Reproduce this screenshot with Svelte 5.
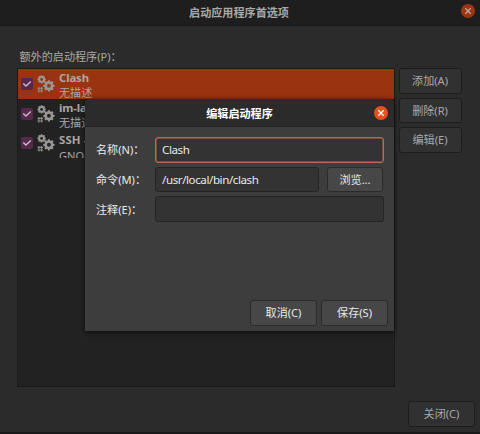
<script>
  const programs = [
    { name: 'Clash', note: '无描述', selected: true },
    { name: 'im-lau', note: '无描述' },
    { name: 'SSH -', note: 'GNOM', low: true }
  ];
  const teeth = [0, 45, 90, 135, 180, 225, 270, 315];
  const cogs = [
    { x: 4.6, y: 4.4, s: 0.7 },
    { x: 11.9, y: 10.8, s: 0.94 }
  ];
</script>

{#snippet closeIcon()}
  <svg width="14" height="14" viewBox="0 0 14 14"><path d="M4.3 4.3l5.4 5.4m0-5.4l-5.4 5.4" fill="none" stroke="currentColor" stroke-width="1.25" /></svg>
{/snippet}

{#snippet gears()}
  <svg class="gears" width="18" height="18" viewBox="0 0 18 18">
    {#each cogs as c}
      <g transform="translate({c.x} {c.y}) scale({c.s})">
        {#each teeth as a}
          <rect x="-1.2" y="-6" width="2.4" height="3" rx=".5" transform="rotate({a})" fill="#989694" />
        {/each}
        <circle r="3.4" fill="none" stroke="#989694" stroke-width="2.7" />
      </g>
    {/each}
    <path d="M1.9 12v5.4M4.6 12v5.4M.5 13.4h5.5M.5 16h5.5" stroke="#8c8a88" stroke-width="1.1" fill="none" />
  </svg>
{/snippet}

<div class="window">
  <header class="bar">
    <h1>启动应用程序首选项</h1>
    <span class="close">{@render closeIcon()}</span>
  </header>
  <main>
    <div class="caption">额外的启动程序(P)：</div>
    <div class="columns">
      <div class="list">
        {#each programs as p}
          <div class="row" class:selected={p.selected} class:low={p.low}>
            <span class="check"><svg width="12" height="12" viewBox="0 0 12 12"><path d="M2.3 5.5l2.6 2.6 4.9-4.6" fill="none" stroke="#c6bdc5" stroke-width="1.4" /></svg></span>
            {@render gears()}
            <div class="info"><b>{p.name}</b><span>{p.note}</span></div>
          </div>
        {/each}
      </div>
      <div class="side">
        <button>添加(A)</button>
        <button>删除(R)</button>
        <button>编辑(E)</button>
      </div>
    </div>
    <footer><button>关闭(C)</button></footer>
  </main>

  <section class="dialog">
    <header class="bar">
      <h1>编辑启动程序</h1>
      <span class="close">{@render closeIcon()}</span>
    </header>
    <div class="form">
      <div class="line"><span class="label">名称(N)：</span><div class="field focus">Clash</div></div>
      <div class="line"><span class="label">命令(M)：</span><div class="field path">/usr/local/bin/clash</div><button class="browse">浏览...</button></div>
      <div class="line"><span class="label">注释(E)：</span><div class="field"></div></div>
    </div>
    <div class="actions"><button>取消(C)</button><button>保存(S)</button></div>
  </section>
</div>

<style>
  :global(body) { margin: 0; background: #2b2b2b; }
  * { box-sizing: border-box; }
  .window {
    position: relative; width: 480px; height: 434px; overflow: hidden;
    background: #2b2b2b; color: #aaa8a6; border-bottom: 2px solid #1b1a1b;
    font: 11.1px/15px "Noto Sans", "Noto Sans CJK SC", sans-serif; white-space: nowrap;
  }
  .bar { display: flex; align-items: center; justify-content: center; position: relative; }
  .window > .bar { height: 26px; background: #1e1e1e; border-bottom: 1px solid #191919; }
  h1 { margin: 0; font-size: 11.1px; line-height: 15px; font-weight: 700; }
  .window > .bar h1 { padding-right: 2px; }
  .close {
    position: absolute; right: 5px; top: 4px; width: 14px; height: 14px;
    border-radius: 50%; background: #9e3510; color: #c0aaa2; display: flex;
  }
  .caption { padding: 23px 0 0 19.5px; height: 42px; }
  .columns { display: flex; padding-left: 17px; }
  .list { width: 378px; height: 319px; background: #222; border: 1px solid #1a1a1a; flex: none; }
  .row { height: 29.7px; display: flex; padding-left: 3px; overflow: hidden; }
  .row.selected { background: #9a330f; }
  .check { width: 12px; height: 12px; margin-top: 9px; background: #56294c; border-radius: 2px; display: flex; flex: none; }
  .gears { margin: 6px 0 0 4px; flex: none; }
  .info { display: flex; flex-direction: column; padding-left: 4px; }
  .info b { height: 15px; line-height: 17px; font-size: 11.4px; letter-spacing: -.15px; }
  .info span { height: 16px; line-height: 18px; }
  .low .info { padding-top: 3px; }
  .low b { letter-spacing: .1px; }
  .low .info span { padding-top: 1px; }
  .side { display: flex; flex-direction: column; gap: 4px; padding-left: 4px; }
  button {
    font: inherit; color: inherit; margin: 0; padding: 0; width: 63px; height: 25.7px;
    background: #313131; border: 1px solid #1d1d1d; border-radius: 3px;
    display: flex; align-items: center; justify-content: center;
  }
  .side button { padding: 0 1px 1px 0; }
  footer { display: flex; justify-content: flex-end; padding: 14px 5px 0 0; }
  footer button { width: 67px; }
  .dialog {
    position: absolute; left: 85px; top: 99px; width: 309px; height: 232px;
    background: #3d3d3d; color: #e9e9e9; border-radius: 5px 5px 0 0;
    box-shadow: 0 1px 5px 1px rgba(0, 0, 0, .5);
  }
  .dialog .bar { height: 28px; background: #2b2b2b; border-bottom: 1px solid #202020; border-radius: 5px 5px 0 0; }
  .dialog h1 { color: #fff; padding-top: 1px; }
  .dialog .close { right: 6.5px; top: 6.7px; background: #e5501f; color: #fff; }
  .form { display: flex; flex-direction: column; gap: 4px; padding: 10px 10px 0 11px; }
  .line { display: flex; height: 25.7px; align-items: center; }
  .label { width: 59px; flex: none; }
  .field {
    flex: 1; height: 25.7px; padding: 0 6px; line-height: 24px; background: #333;
    border: 1px solid #242424; border-radius: 3px; font-size: 11.6px; letter-spacing: -.42px;
  }
  .focus { border-color: #b66b50; box-shadow: inset 0 0 0 .5px #b66b50; }
  .path { flex: none; width: 164px; }
  .browse { width: 56px; margin-left: 8px; }
  .dialog button { background: #474747; border-color: #2b2b2b; }
  .actions { display: flex; justify-content: flex-end; gap: 4px; padding: 78px 6px 0 0; }
  .actions button { width: 67px; height: 25.5px; }
</style>
